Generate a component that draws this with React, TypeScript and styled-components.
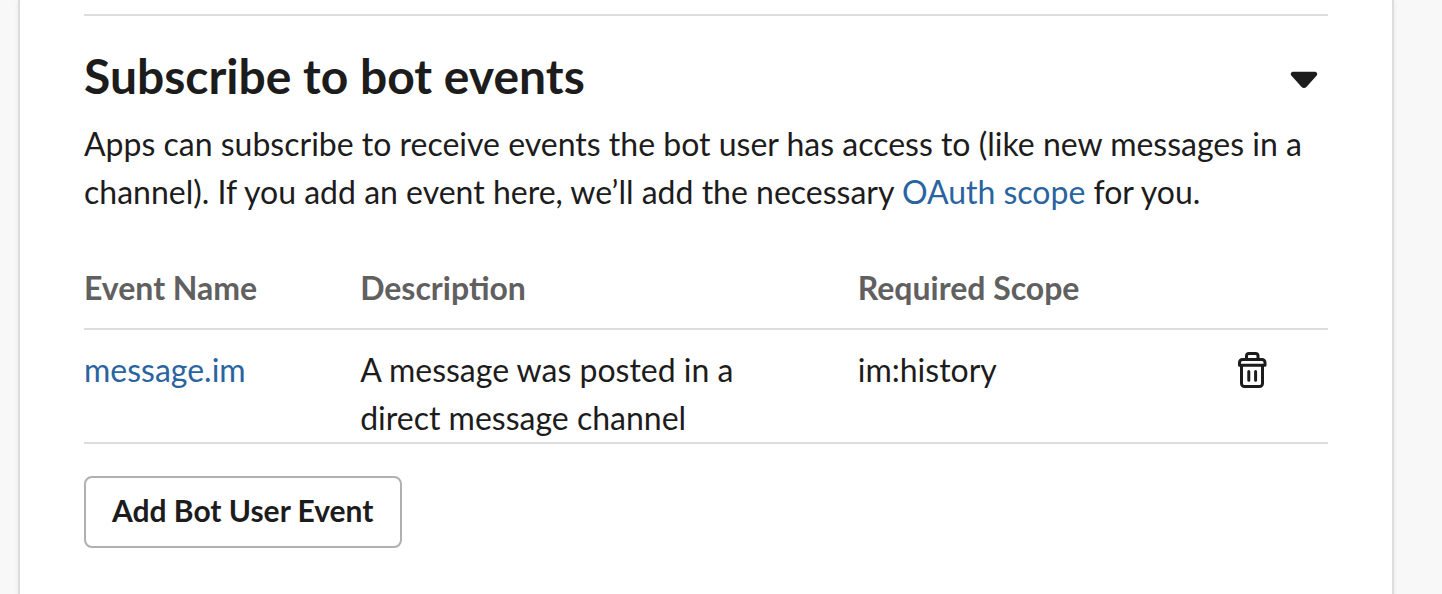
import React from "react";
import styled, { createGlobalStyle } from "styled-components";

const GlobalStyle = createGlobalStyle`
  *, *::before, *::after { box-sizing: border-box; }
  html, body, #root { height: 100%; }
  body {
    margin: 0;
    background: #f8f8f8;
    color: #1d1c1d;
    font-family: Lato, "Liberation Sans", sans-serif;
    font-size: 32px;
    line-height: 48px;
  }
`;

const Page = styled.div`
  display: flex;
  min-height: 100%;
  padding: 0 48px 0 18px;
`;

const Card = styled.main`
  flex: 1;
  padding: 14px 64px 46px;
  background: #fff;
  border: solid #ddd;
  border-width: 0 2px;
  box-shadow: 0 2px 4px rgba(0, 0, 0, 0.08);
`;

const Section = styled.section`
  border-top: 2px solid #ddd;
  padding-top: 32px;
`;

const SectionHeader = styled.header`
  display: flex;
  align-items: center;
  justify-content: space-between;
  padding-right: 10px;
`;

const Title = styled.h2`
  margin: 0;
  font-size: 48px;
  line-height: 56px;
  font-weight: 700;
`;

const IconButton = styled.button`
  display: flex;
  padding: 0;
  border: 0;
  background: none;
  color: inherit;
  cursor: pointer;
`;

const Intro = styled.p`
  margin: 16px 0 48px;
`;

const Link = styled.a`
  color: #2a649f;
  text-decoration: none;
  &:hover { text-decoration: underline; }
`;

const EventTable = styled.table`
  width: 100%;
  table-layout: fixed;
  border-collapse: separate;
  border-spacing: 0;
`;

const Column = styled.col<{ $share?: string }>`
  width: ${({ $share }) => $share ?? "auto"};
`;

const HeadCell = styled.th`
  padding: 0 0 16px;
  border-bottom: 2px solid #ddd;
  color: #616061;
  font-weight: 700;
  text-align: left;
`;

const Cell = styled.td<{ $gutter?: boolean }>`
  padding: 16px ${({ $gutter }) => ($gutter ? "100px" : "0")} 0 0;
  border-bottom: 2px solid #ddd;
  vertical-align: top;
`;

const RemoveButton = styled(IconButton)`
  padding: 5px 0;
`;

const AddButton = styled.button`
  display: block;
  margin-top: 32px;
  padding: 0 27px 4px 26px;
  border: 2px solid #b0b0b0;
  border-radius: 8px;
  background: #fff;
  color: inherit;
  font: 700 30px/64px Lato, "Liberation Sans", sans-serif;
  cursor: pointer;
`;

const CaretIcon = () => (
  <svg width="28" height="28" viewBox="0 0 28 28" fill="currentColor" aria-hidden="true">
    <path d="M3.2 9.800H24.800C27 9.800 28 12.200 26.500 13.800L16.600 24.700C15.200 26.300 12.800 26.300 11.400 24.700L1.500 13.800C0 12.200 1 9.800 3.200 9.800Z" />
  </svg>
);

const TrashIcon = () => (
  <svg width="30" height="38" viewBox="0 0 30 38" fill="none" stroke="currentColor" strokeWidth="3" strokeLinecap="round" strokeLinejoin="round" aria-hidden="true">
    <path d="M8.500 8V5A2.500 2.500 0 0 1 11 2.500H17.500A2.500 2.500 0 0 1 20 5V8" />
    <path d="M4.500 8.500H24A3 3 0 0 1 27 11.500V14.200H1.500V11.500A3 3 0 0 1 4.500 8.500Z" />
    <path d="M3.500 14.500V32.500A3 3 0 0 0 6.500 35.500H21.500A3 3 0 0 0 24.500 32.500V14.500" />
    <path d="M10.800 20.500V29.300M17.600 20.500V29.300" />
  </svg>
);

const events = [
  { name: "message.im", description: "A message was posted in a direct message channel", scope: "im:history" },
];

export default function App() {
  return (
    <>
      <GlobalStyle />
      <Page>
        <Card>
          <Section>
            <SectionHeader>
              <Title>Subscribe to bot events</Title>
              <IconButton type="button" aria-label="Collapse section" aria-expanded="true">
                <CaretIcon />
              </IconButton>
            </SectionHeader>
            <Intro>
              Apps can subscribe to receive events the bot user has access to (like new messages in a
              channel). If you add an event here, we’ll add the necessary <Link href="#oauth">OAuth scope</Link> for you.
            </Intro>
            <EventTable>
              <colgroup>
                <Column $share="22.2%" />
                <Column $share="40%" />
                <Column />
                <Column $share="7.2%" />
              </colgroup>
              <thead>
                <tr>
                  <HeadCell scope="col">Event Name</HeadCell>
                  <HeadCell scope="col">Description</HeadCell>
                  <HeadCell scope="col">Required Scope</HeadCell>
                  <HeadCell as="td" />
                </tr>
              </thead>
              <tbody>
                {events.map((event) => (
                  <tr key={event.name}>
                    <Cell><Link href="#message-im">{event.name}</Link></Cell>
                    <Cell $gutter>{event.description}</Cell>
                    <Cell>{event.scope}</Cell>
                    <Cell>
                      <RemoveButton type="button" aria-label={`Remove ${event.name}`}>
                        <TrashIcon />
                      </RemoveButton>
                    </Cell>
                  </tr>
                ))}
              </tbody>
            </EventTable>
            <AddButton type="button">Add Bot User Event</AddButton>
          </Section>
        </Card>
      </Page>
    </>
  );
}
